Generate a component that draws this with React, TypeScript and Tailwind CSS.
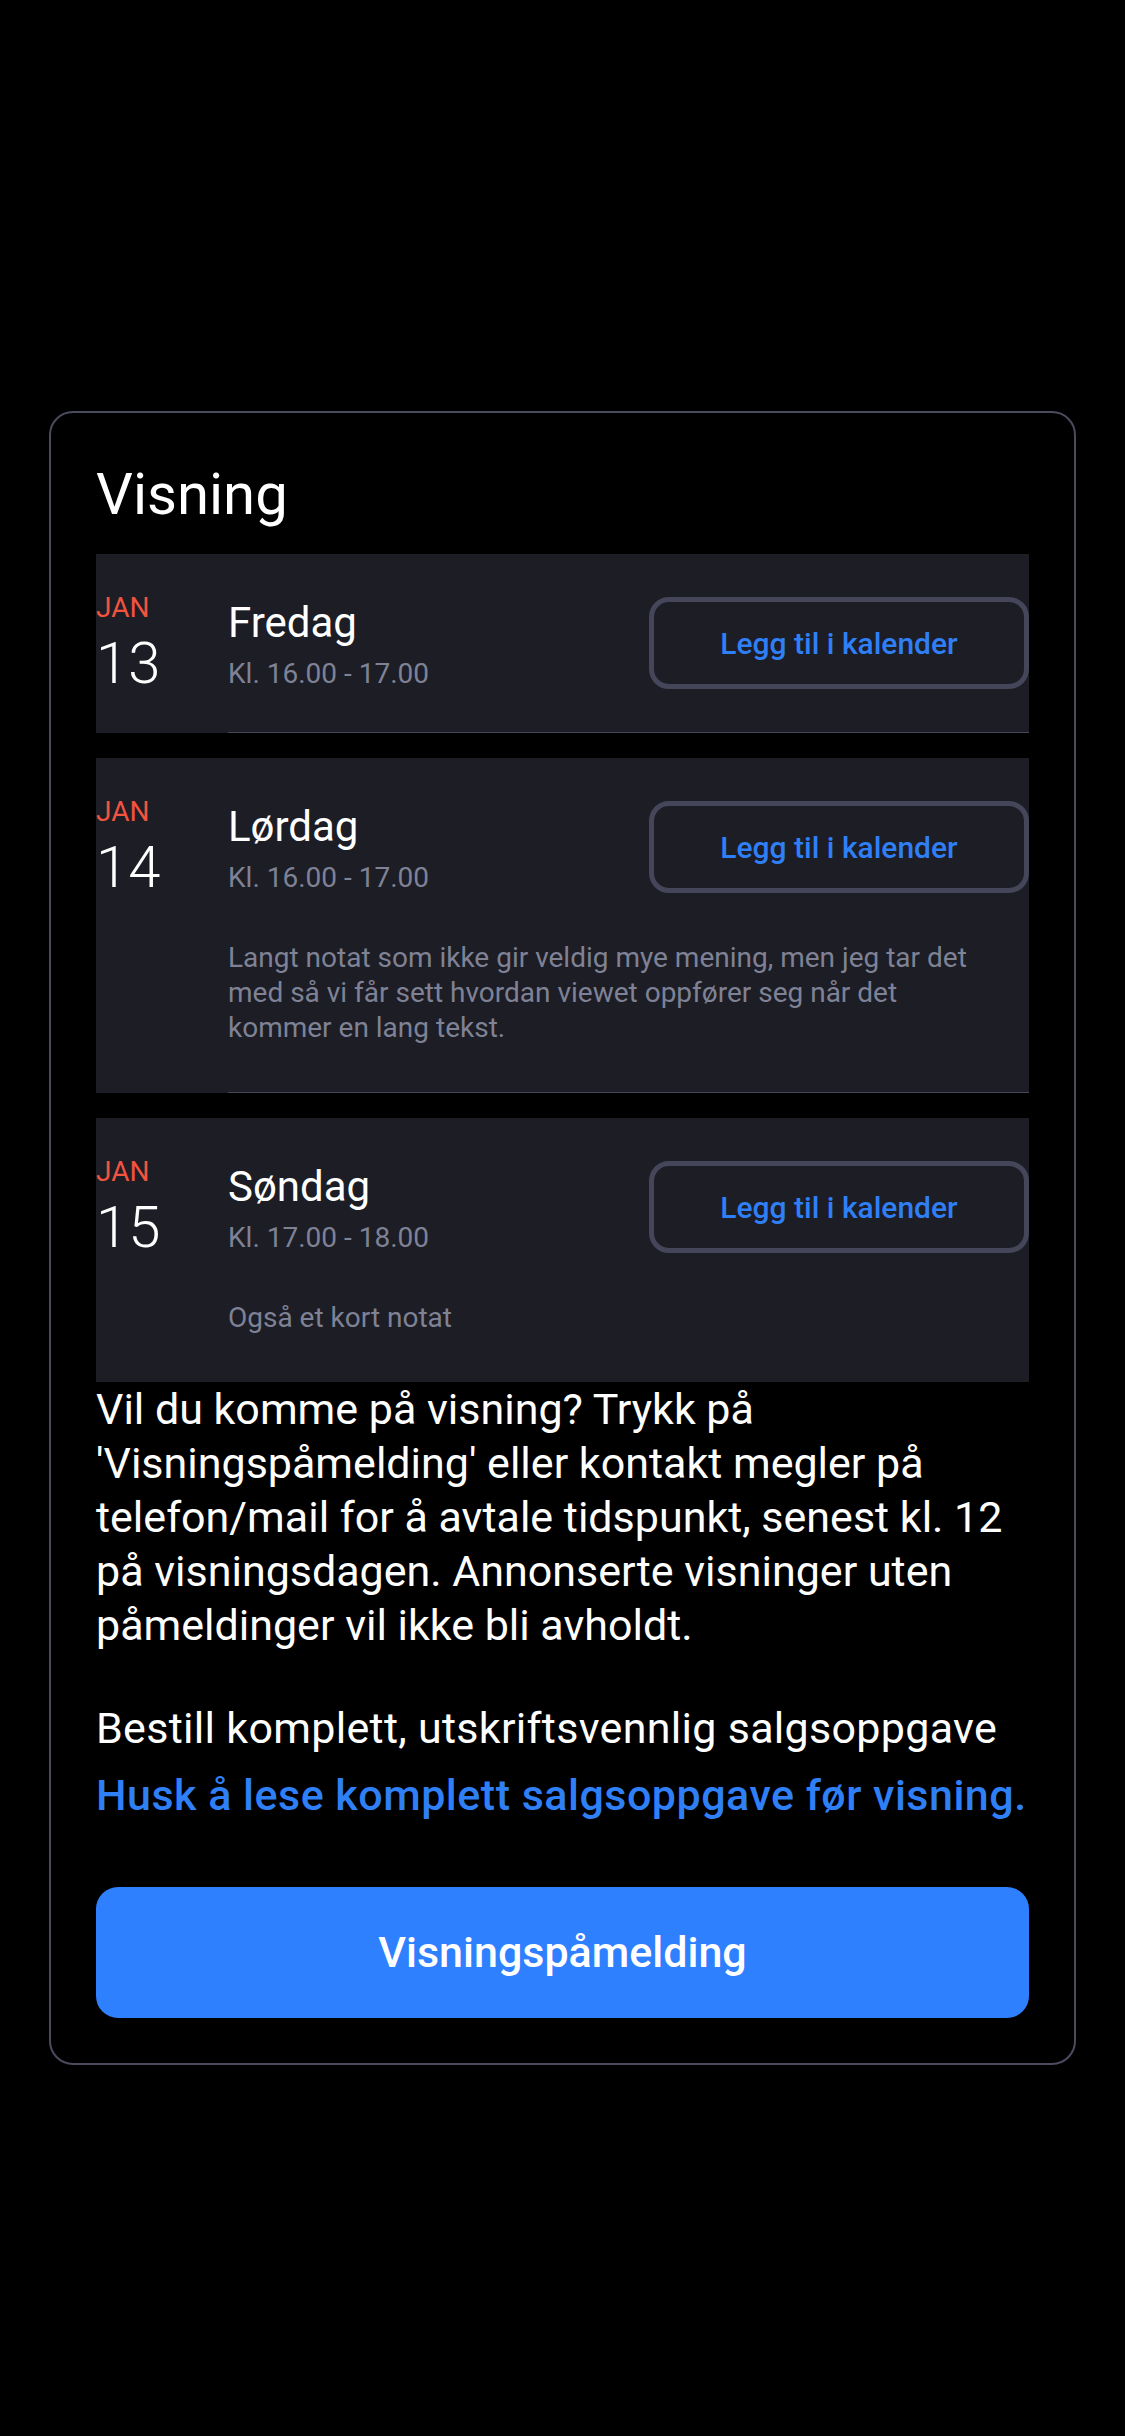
import React from "react";

type Showing = {
  month: string;
  day: string;
  weekday: string;
  time: string;
  note?: string;
};

const showings: Showing[] = [
  { month: "JAN", day: "13", weekday: "Fredag", time: "Kl. 16.00 - 17.00" },
  {
    month: "JAN",
    day: "14",
    weekday: "Lørdag",
    time: "Kl. 16.00 - 17.00",
    note: "Langt notat som ikke gir veldig mye mening, men jeg tar det med så vi får sett hvordan viewet oppfører seg når det kommer en lang tekst.",
  },
  {
    month: "JAN",
    day: "15",
    weekday: "Søndag",
    time: "Kl. 17.00 - 18.00",
    note: "Også et kort notat",
  },
];

export default function App() {
  return (
    <div className="min-h-screen bg-black pt-[411px] pb-[371px] font-['Roboto',sans-serif]">
      <div className="mx-[49px] rounded-[24px] border-2 border-[#4b4b5e] px-[45px] pt-[46px] pb-[45px]">
        <h2 className="text-[58px] leading-[70px] text-white">Visning</h2>

        {/* visningsdatoer */}
        <div className="mt-[25px] flex flex-col gap-[25px]">
          {showings.map((s, i) => (
            <ShowingRow key={s.day} showing={s} last={i === showings.length - 1} />
          ))}
        </div>

        <p className="text-[43px] leading-[54px] text-white">
          Vil du komme på visning? Trykk på 'Visningspåmelding' eller kontakt megler på telefon/mail for å
          avtale tidspunkt, senest kl. 12 på visningsdagen. Annonserte visninger uten påmeldinger vil ikke
          bli avholdt.
        </p>

        <p className="mt-[49px] text-[43px] leading-[54px] tracking-[0.3px] text-white">
          Bestill komplett, utskriftsvennlig salgsoppgave
        </p>
        <p className="mt-[13px] whitespace-nowrap text-[43px] leading-[54px] font-medium tracking-[0.5px] text-[#2f7ff6]">
          Husk å lese komplett salgsoppgave før visning.
        </p>

        <button className="mt-[65px] flex h-[131px] w-full items-center justify-center rounded-[22px] bg-[#2f80ff] text-[43px] font-medium text-white">
          Visningspåmelding
        </button>
      </div>
    </div>
  );
}

function ShowingRow({ showing, last }: { showing: Showing; last: boolean }) {
  return (
    <div className="flex bg-[#1c1d25]">
      {/* dato */}
      <div className="w-[132px] shrink-0 pt-[37px]">
        <div className="text-[28px] leading-[34px] text-[#f2533f]">{showing.month}</div>
        <div className="mt-[9px] text-[58px] leading-[58px] font-light text-white">{showing.day}</div>
      </div>

      {/* innhold */}
      <div
        className={
          last
            ? "flex-1 pt-[37px] pb-[38px]"
            : "flex-1 pt-[37px] pb-[38px] border-b border-[#47475a]"
        }
      >
        <div className="flex items-start justify-between">
          <div>
            <div className="text-[42px] leading-[63px] text-white">{showing.weekday}</div>
            <div className="text-[28px] leading-[40px] text-[#7f8295]">{showing.time}</div>
          </div>
          <button className="mt-[6px] flex h-[92px] w-[380px] items-center justify-center rounded-[20px] border-[5px] border-[#46465a] text-[30px] font-medium text-[#2f7ff6]">
            Legg til i kalender
          </button>
        </div>
        {showing.note && (
          <p className="mt-[42px] mb-[9px] pr-[23px] text-[28px] leading-[35px] text-[#7f8295]">
            {showing.note}
          </p>
        )}
      </div>
    </div>
  );
}
